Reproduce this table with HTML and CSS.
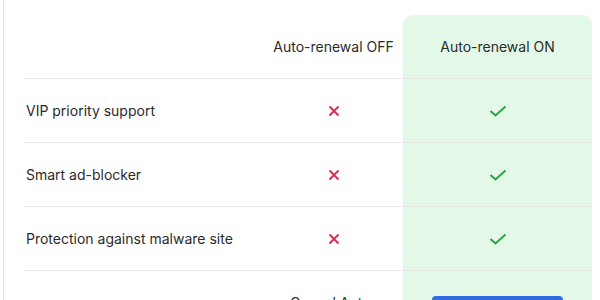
FILE: index.html
```html
<!DOCTYPE html>
<html>
<head>
<meta charset="utf-8">
<link rel="stylesheet" href="styles.css">
</head>
<body>
<div class="card">
  <div class="table">
    <div class="cell head label"></div>
    <div class="cell head off">Auto-renewal OFF</div>
    <div class="cell head on top">Auto-renewal ON</div>

    <div class="cell label">VIP priority support</div>
    <div class="cell off"><svg class="x" width="12" height="12" viewBox="0 0 12 12"><path d="M1.5 1.5L10.5 10.5M10.5 1.5L1.5 10.5"/></svg></div>
    <div class="cell on"><svg class="ok" width="18" height="12" viewBox="0 0 18 12"><path d="M1.5 6L6.5 10.5L16.5 1.5"/></svg></div>

    <div class="cell label">Smart ad-blocker</div>
    <div class="cell off"><svg class="x" width="12" height="12" viewBox="0 0 12 12"><path d="M1.5 1.5L10.5 10.5M10.5 1.5L1.5 10.5"/></svg></div>
    <div class="cell on"><svg class="ok" width="18" height="12" viewBox="0 0 18 12"><path d="M1.5 6L6.5 10.5L16.5 1.5"/></svg></div>

    <div class="cell label">Protection against malware site</div>
    <div class="cell off"><svg class="x" width="12" height="12" viewBox="0 0 12 12"><path d="M1.5 1.5L10.5 10.5M10.5 1.5L1.5 10.5"/></svg></div>
    <div class="cell on"><svg class="ok" width="18" height="12" viewBox="0 0 18 12"><path d="M1.5 6L6.5 10.5L16.5 1.5"/></svg></div>

    <div class="cell last label"></div>
    <div class="cell last off"><span class="cancel">Cancel Auto-renewal</span></div>
    <div class="cell last on"><button class="btn">Turn on</button></div>
  </div>
</div>
</body>
</html>
```

FILE: styles.css
```css
html, body {
  margin: 0;
  padding: 0;
  background: #fff;
  width: 600px;
  height: 300px;
  overflow: hidden;
}
body {
  font-family: Inter, "Noto Sans", sans-serif;
  color: #2b2b2b;
}
.card {
  margin-left: 3px;
  border-left: 1px solid #e4e4e4;
  padding: 15px 8px 0 21px;
  height: 400px;
}
.table {
  display: grid;
  grid-template-columns: 239px 139px 189px;
}
.cell {
  display: flex;
  align-items: center;
  justify-content: center;
  height: 63px;
  border-bottom: 1px solid #e6e6e6;
  font-size: 14px;
}
.cell.label {
  justify-content: flex-start;
  padding-left: 1px;
}
.cell.on {
  background: #e4f8e8;
}
.cell.top {
  border-top-left-radius: 9px;
  border-top-right-radius: 9px;
}
.cell.head {
  padding-top: 0;
}
.cell.last {
  border-bottom: none;
  align-items: flex-start;
  padding-top: 24px;
  height: 80px;
}
.x path {
  stroke: #d8324f;
  stroke-width: 2;
  fill: none;
}
.ok path {
  stroke: #2aa544;
  stroke-width: 2;
  fill: none;
}
.cancel {
  width: 100px;
  text-align: center;
  line-height: 18px;
  margin-top: -1px;
}
.btn {
  width: 131px;
  height: 36px;
  border: none;
  border-radius: 4px;
  background: #2f6ce0;
  color: #fff;
  font-family: inherit;
  font-size: 14px;
  margin-top: 1px;
}
```
